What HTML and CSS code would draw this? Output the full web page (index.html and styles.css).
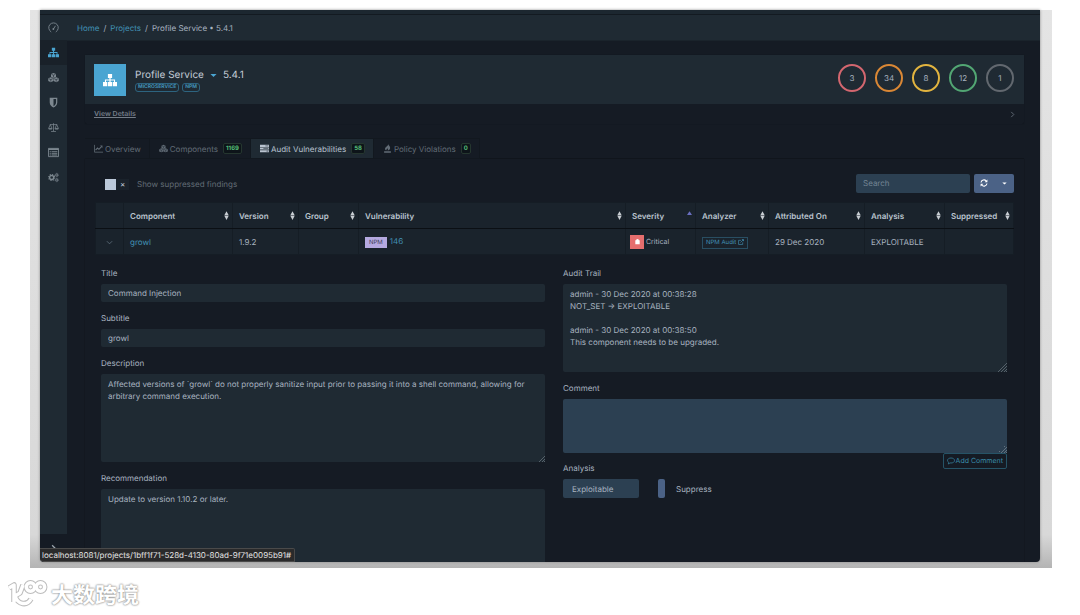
FILE: index.html
```
<!DOCTYPE html>
<html lang="en">
<head>
    <meta charset="UTF-8">
    <meta name="viewport" content="width=device-width, initial-scale=1.0">
    <title>Profile Service - Audit Vulnerabilities</title>
    <link rel="stylesheet" href="styles.css">
</head>
<body>

<!-- icon set -->
<svg class="icon-defs" aria-hidden="true">
    <symbol id="i-dash" viewBox="0 0 16 16"><path d="M4.2 14.2A7 7 0 1 1 11.8 14.2M8 10l2.600-4" fill="none" stroke="currentColor" stroke-width="1.300" stroke-linecap="round"/><circle cx="7.8" cy="10.2" r="1.300" fill="currentColor"/></symbol>
    <symbol id="i-sitemap" viewBox="0 0 16 16"><path d="M5.6 1h4.8v4.6H8.7v1.7h5.1v3.1H16V15h-4.8v-4.6h1.4V8.6H8.7v1.8h1.7V15H5.6v-4.6h1.7V8.6H3.4v1.8h1.4V15H0v-4.6h2.2V7.3h5.1V5.6H5.6z" fill="currentColor"/></symbol>
    <symbol id="i-cubes" viewBox="0 0 18 16"><path d="M9 .6l4.1 1.7v4.6L9 8.8 4.9 6.9V2.3zM4.6 7.6l4.1 1.8v4.4l-4.1 1.8-4.2-1.8V9.4zM13.4 7.6l4.2 1.8v4.4l-4.2 1.8-4.1-1.8V9.4z" fill="currentColor"/><path d="M5.6 2.8L9 4.2l3.4-1.4M9 4.2v3.6M1.1 9.9l3.5 1.5L8 9.9M4.6 11.4V15M10 9.9l3.4 1.5 3.5-1.5M13.4 11.4V15" fill="none" stroke="#1b252e" stroke-width="1"/></symbol>
    <symbol id="i-shield" viewBox="0 0 16 16"><path d="M2.500 1h11v7c0 3.600-2.500 5.800-5.500 7.400C5 13.800 2.500 11.600 2.500 8zM8 2.800V13.300c2.200-1.400 3.700-3 3.700-5.300V2.800z" fill="currentColor" fill-rule="evenodd"/></symbol>
    <symbol id="i-scale" viewBox="0 0 18 16"><path d="M9 1v13M5 14.500h8M3 3.200h12M3.800 3.200L1 9.500h5.600zM14.200 3.200l-2.800 6.300H17z" fill="none" stroke="currentColor" stroke-width="1.200"/><path d="M.5 9.500h6.600c-.5 2.600-6.100 2.600-6.600 0zM10.900 9.500h6.600c-.5 2.600-6.100 2.600-6.600 0z" fill="currentColor"/></symbol>
    <symbol id="i-list" viewBox="0 0 16 16"><path d="M.7 2h14.600v12H.7z" fill="none" stroke="currentColor" stroke-width="1.300"/><path d="M.7 2h14.600v2.500H.7zM2.500 6h1.600v1.400H2.500zM5.200 6h8.300v1.400H5.200zM2.500 8.500h1.600v1.400H2.500zM5.200 8.500h8.300v1.400H5.200zM2.500 11h1.600v1.400H2.500zM5.200 11h8.300v1.400H5.200z" fill="currentColor"/></symbol>
    <symbol id="i-cogs" viewBox="0 0 18 16"><g fill="none" stroke="currentColor"><circle cx="6" cy="8" r="3.300" stroke-width="2.200"/><circle cx="6" cy="8" r="5" stroke-width="1.700" stroke-dasharray="1.960 1.960"/><circle cx="14.300" cy="3.900" r="1.800" stroke-width="1.400"/><circle cx="14.300" cy="3.900" r="2.900" stroke-width="1" stroke-dasharray="1.140 1.140"/><circle cx="14.300" cy="12.100" r="1.800" stroke-width="1.400"/><circle cx="14.300" cy="12.100" r="2.900" stroke-width="1" stroke-dasharray="1.140 1.140"/></g></symbol>
    <symbol id="i-chart" viewBox="0 0 16 16"><path d="M.8 1.500v13H16" fill="none" stroke="currentColor" stroke-width="1.400"/><path d="M2.800 10.800l3.400-3.600 2.600 2.300 4.500-4.700" fill="none" stroke="currentColor" stroke-width="2"/><path d="M10.800 2.800H15V7z" fill="currentColor"/></symbol>
    <symbol id="i-tasks" viewBox="0 0 16 16"><path d="M0 1.500h16v3.700H0zM0 6.200h16v3.700H0zM0 10.900h16v3.700H0z" fill="currentColor"/><path d="M9.500 3.400h5.300M6 8h8.800M11.500 12.700h3.300" stroke="#1e2932" stroke-width="1"/></symbol>
    <symbol id="i-fire" viewBox="0 0 16 16"><path d="M2 13h12v2.500H2zM9.500.5c.6 2.500 3.500 3.600 3.200 6.700-.2 2.300-2 4-4.500 4.300 1-1.600.8-2.700-.3-3.800-.3 1.700-2.200 2-2.200 3.700C2.600 9.800 3.200 7 5.500 5.200 7.600 3.600 8.800 2.600 9.500.5z" fill="currentColor"/></symbol>
    <symbol id="i-refresh" viewBox="0 0 16 16"><path d="M2 7a6 6 0 0 1 10.500-3M14 9a6 6 0 0 1-10.500 3" fill="none" stroke="currentColor" stroke-width="2.200"/><path d="M14.800 1v5.600H9.200zM1.200 15V9.400h5.600z" fill="currentColor"/></symbol>
    <symbol id="i-bug" viewBox="0 0 16 16"><path d="M5 5a3 3 0 0 1 6 0h2v9H3V5z" fill="currentColor"/></symbol>
    <symbol id="i-link" viewBox="0 0 16 16"><path d="M8 3.500H1.500v11h11V9M6.500 9.500l6.500-6.500" fill="none" stroke="currentColor" stroke-width="1.700"/><path d="M9.500.5h6v6z" fill="currentColor"/></symbol>
    <symbol id="i-comment" viewBox="0 0 16 16"><path d="M8 2c4 0 7 2 7 5s-3 5-7 5c-.7 0-1.300 0-1.900-.2-1 1.100-2.300 1.900-3.800 2.100.7-.9 1.100-1.800 1.200-2.900C2 10 1 8.600 1 7c0-3 3-5 7-5z" fill="none" stroke="currentColor" stroke-width="1.400"/></symbol>
    <symbol id="i-right" viewBox="0 0 16 16"><path d="M5 2l6 6-6 6" fill="none" stroke="currentColor" stroke-width="2"/></symbol>
    <symbol id="i-down" viewBox="0 0 16 16"><path d="M2 5l6 6 6-6" fill="none" stroke="currentColor" stroke-width="1.800"/></symbol>
    <symbol id="i-caret" viewBox="0 0 16 16"><path d="M1 4.500h14L8 11.500z" fill="currentColor"/></symbol>
    <symbol id="i-sort" viewBox="0 0 8 14"><path d="M4 0l3.500 6.500h-7zM4 14l3.500-6.500h-7z" fill="currentColor"/></symbol>
    <symbol id="i-asc" viewBox="0 0 8 14"><path d="M4 0l4 6H0z" fill="currentColor"/></symbol>
</svg>

<div class="backdrop">
<div class="window">
    <div class="navbar"></div>
    <div class="app">

        <div class="sidebar">
            <nav class="side-nav">
                <a href="#" aria-label="Dashboard"><svg><use href="#i-dash"/></svg></a>
                <a href="#" class="active" aria-label="Projects"><svg><use href="#i-sitemap"/></svg></a>
                <a href="#" aria-label="Components"><svg><use href="#i-cubes"/></svg></a>
                <a href="#" aria-label="Vulnerabilities"><svg><use href="#i-shield"/></svg></a>
                <a href="#" aria-label="Licenses"><svg><use href="#i-scale"/></svg></a>
                <a href="#" aria-label="Policy Management"><svg><use href="#i-list"/></svg></a>
                <a href="#" aria-label="Administration"><svg><use href="#i-cogs"/></svg></a>
            </nav>
            <button type="button" class="minimizer" aria-label="Expand"><svg><use href="#i-right"/></svg></button>
        </div>

        <main>
            <div class="breadcrumb">
                <a href="#">Home</a><span>/</span><a href="#">Projects</a><span>/</span>Profile Service • 5.4.1
            </div>

            <div class="content">
                <div class="card">
                    <div class="card-body">
                        <div class="project-icon"><svg><use href="#i-sitemap"/></svg></div>
                        <div class="project">
                            <div class="project-name">Profile Service <svg><use href="#i-caret"/></svg> 5.4.1</div>
                            <div class="tags"><a href="#">MICROSERVICE</a><a href="#">NPM</a></div>
                        </div>
                        <div class="scores">
                            <span class="score critical">3</span>
                            <span class="score high">34</span>
                            <span class="score medium">8</span>
                            <span class="score low">12</span>
                            <span class="score unassigned">1</span>
                        </div>
                    </div>
                    <div class="card-footer">
                        <a href="#">View Details</a>
                        <svg><use href="#i-right"/></svg>
                    </div>
                </div>

                <div class="tabs">
                    <a href="#"><svg><use href="#i-chart"/></svg>Overview</a>
                    <a href="#"><svg><use href="#i-cubes"/></svg>Components <span class="badge">1169</span></a>
                    <a href="#" class="active"><svg><use href="#i-tasks"/></svg>Audit Vulnerabilities <span class="badge">58</span></a>
                    <a href="#"><svg><use href="#i-fire"/></svg>Policy Violations <span class="badge">0</span></a>
                </div>

                <div class="tab-content">
                    <div class="toolbar">
                        <label class="toggle"><input type="checkbox"><span class="switch">×</span>Show suppressed findings</label>
                        <input type="text" class="search" placeholder="Search" aria-label="Search">
                        <div class="btn-group">
                            <button type="button" aria-label="Refresh"><svg><use href="#i-refresh"/></svg></button>
                            <button type="button" aria-label="Columns"><svg class="small"><use href="#i-caret"/></svg></button>
                        </div>
                    </div>

                    <table>
                        <colgroup>
                            <col class="c-toggle"><col class="c-component"><col class="c-version"><col class="c-group"><col>
                            <col class="c-severity"><col class="c-analyzer"><col class="c-date"><col class="c-analysis"><col class="c-suppressed">
                        </colgroup>
                        <thead>
                            <tr>
                                <th></th>
                                <th><div>Component<svg><use href="#i-sort"/></svg></div></th>
                                <th><div>Version<svg><use href="#i-sort"/></svg></div></th>
                                <th><div>Group<svg><use href="#i-sort"/></svg></div></th>
                                <th><div>Vulnerability<svg><use href="#i-sort"/></svg></div></th>
                                <th><div>Severity<svg class="asc"><use href="#i-asc"/></svg></div></th>
                                <th><div>Analyzer<svg><use href="#i-sort"/></svg></div></th>
                                <th><div>Attributed On<svg><use href="#i-sort"/></svg></div></th>
                                <th><div>Analysis<svg><use href="#i-sort"/></svg></div></th>
                                <th><div>Suppressed<svg><use href="#i-sort"/></svg></div></th>
                            </tr>
                        </thead>
                        <tbody>
                            <tr>
                                <td class="expand"><svg><use href="#i-down"/></svg></td>
                                <td><a href="#">growl</a></td>
                                <td>1.9.2</td>
                                <td></td>
                                <td><span class="source">NPM</span><a href="#">146</a></td>
                                <td class="severity"><span class="sev-icon"><svg><use href="#i-bug"/></svg></span>Critical</td>
                                <td><a href="#" class="audit">NPM Audit <svg><use href="#i-link"/></svg></a></td>
                                <td>29 Dec 2020</td>
                                <td>EXPLOITABLE</td>
                                <td></td>
                            </tr>
                        </tbody>
                    </table>

                    <form class="detail">
                        <div class="detail-col">
                            <div class="form-group">
                                <label for="title">Title</label>
                                <input type="text" id="title" value="Command Injection" readonly>
                            </div>
                            <div class="form-group">
                                <label for="subtitle">Subtitle</label>
                                <input type="text" id="subtitle" value="growl" readonly>
                            </div>
                            <div class="form-group">
                                <label for="description">Description</label>
                                <textarea id="description" class="tall" readonly>Affected versions of `growl` do not properly sanitize input prior to passing it into a shell command, allowing for arbitrary command execution.</textarea>
                            </div>
                            <div class="form-group last">
                                <label for="recommendation">Recommendation</label>
                                <textarea id="recommendation" class="cut" readonly>Update to version 1.10.2 or later.</textarea>
                            </div>
                        </div>
                        <div class="detail-col">
                            <div class="form-group">
                                <label for="trail">Audit Trail</label>
                                <textarea id="trail" class="tall" readonly>admin - 30 Dec 2020 at 00:38:28
NOT_SET → EXPLOITABLE

admin - 30 Dec 2020 at 00:38:50
This component needs to be upgraded.</textarea>
                            </div>
                            <div class="form-group last">
                                <label for="comment">Comment</label>
                                <textarea id="comment" class="comment"></textarea>
                            </div>
                            <div class="actions">
                                <div class="analysis">
                                    <label for="analysis">Analysis</label>
                                    <div class="analysis-row">
                                        <select id="analysis"><option>Exploitable</option></select>
                                        <label class="suppress"><input type="checkbox"><span class="handle"></span>Suppress</label>
                                    </div>
                                </div>
                                <button type="button" class="add-comment"><svg><use href="#i-comment"/></svg>Add Comment</button>
                            </div>
                        </div>
                    </form>
                </div>
            </div>
        </main>
    </div>
    <div class="status">localhost:8081/projects/1bff1f71-528d-4130-80ad-9f71e0095b91#</div>
</div>
</div>

<div class="watermark">
    <svg viewBox="0 0 40 28"><g fill="none" stroke-linejoin="round"><g stroke="#bdbdbd" stroke-width="5.500"><path d="M1 8l5-3v17M15 5l-3 8-5 3c3 9 12 10 16 3"/><circle cx="22.500" cy="7" r="4.200"/><circle cx="32.500" cy="7" r="4.200"/></g><g stroke="#fff" stroke-width="3.500"><path d="M1 8l5-3v17M15 5l-3 8-5 3c3 9 12 10 16 3"/><circle cx="22.500" cy="7" r="4.200"/><circle cx="32.500" cy="7" r="4.200"/></g></g></svg>
    <span lang="zh">大数跨境</span>
</div>

</body>
</html>
```
FILE: styles.css
```
* {
    box-sizing: border-box;
}

body {
    margin: 0;
    background: #fff;
    color: #a9b4c0;
    font-family: Inter, "Liberation Sans", sans-serif;
    font-size: 8px;
    line-height: 12px;
    text-rendering: geometricPrecision;
}

a {
    color: #4292b6;
    text-decoration: none;
}

button, input, select, textarea {
    font: inherit;
    color: inherit;
    text-rendering: inherit;
    border: 0;
    margin: 0;
}

svg {
    width: 10px;
    height: 10px;
    flex: none;
}

.icon-defs {
    position: absolute;
    width: 0;
    height: 0;
}

/* window */

.backdrop {
    margin: 10px 28px 0 30px;
    padding: 0 12px 6px 10px;
    background: linear-gradient(#e4e4e4, #d8d8d8 94%, #b4b4b4);
}

.window {
    position: relative;
    background: #151b24;
    border-radius: 0 0 4px 4px;
    overflow: hidden;
    box-shadow: 0 0 3px #888;
}

.navbar {
    height: 5px;
    background: #1c2730;
    border-bottom: 1px solid #131a21;
}

.app {
    display: flex;
}

.sidebar {
    width: 27px;
    display: flex;
    flex-direction: column;
}

.side-nav {
    flex: 1;
    background: #1f2a33;
}

.side-nav a {
    display: flex;
    align-items: center;
    justify-content: center;
    height: 25px;
    color: #7d8890;
}

.side-nav svg {
    width: 11px;
    height: 11px;
}

.side-nav a.active {
    background: #192129;
    color: #4aa3cf;
}

.minimizer {
    height: 28px;
    padding: 4px 0 0;
    background: none;
    color: #9aa3ab;
}

main {
    flex: 1;
    min-width: 0;
}

.breadcrumb {
    height: 26px;
    padding: 0 10px;
    line-height: 26px;
    background: #1f2a33;
    border-bottom: 1px solid #1a232b;
}

.breadcrumb span {
    margin: 0 4px;
}

.content {
    padding: 14px 16px 0 18px;
}

/* project card */

.card {
    border-radius: 2px;
    box-shadow: 0 0 1px #0c1116;
    margin-bottom: 14px;
}

.card-body {
    display: flex;
    align-items: flex-start;
    height: 49px;
    padding: 9px 10px 0 9px;
    background: #1f2a33;
}

.project-icon {
    display: flex;
    align-items: center;
    justify-content: center;
    width: 32px;
    height: 32px;
    background: #4aa5d2;
    color: #fff;
}

.project-icon svg {
    width: 14px;
    height: 14px;
}

.project {
    flex: 1;
    margin: 4px 0 0 9px;
}

.project-name {
    display: flex;
    align-items: center;
    gap: 6px;
    font-size: 10px;
    line-height: 14px;
    color: #c5cdd8;
}

.project-name svg {
    width: 7px;
    height: 7px;
    color: #4aa5d2;
}

.tags {
    display: flex;
    gap: 3px;
    margin-top: 1px;
}

.tags a {
    padding: 0 2px;
    border: 1px solid #2d6480;
    border-radius: 3px;
    font-size: 5px;
    font-weight: 700;
    line-height: 7px;
}

.scores {
    display: flex;
    gap: 9px;
}

.score {
    width: 28px;
    height: 28px;
    border: 2px solid;
    border-radius: 50%;
    line-height: 24px;
    text-align: center;
}

.critical { border-color: #d3666f; }
.high { border-color: #d98735; }
.medium { border-color: #e2b43f; }
.low { border-color: #52a673; }
.unassigned { border-color: #62686f; }

.card-footer {
    display: flex;
    align-items: center;
    justify-content: space-between;
    height: 20px;
    padding: 0 8px 0 9px;
}

.card-footer a {
    color: #747d88;
    font-size: 7px;
    font-weight: 600;
    text-decoration: underline;
}

.card-footer svg {
    width: 7px;
    height: 7px;
    color: #68717c;
}

/* tabs */

.tabs {
    display: flex;
    box-shadow: inset 0 -1px #12181f;
}

.tabs a {
    display: flex;
    align-items: center;
    height: 21px;
    padding: 0 8px 0 9px;
    border: 1px solid #12181f;
    border-left: 0;
    color: #626c76;
}

.tabs svg {
    width: 9px;
    height: 9px;
    margin-right: 2px;
}

.tabs a.active {
    background: #1f2a33;
    color: #b9c3cf;
}

.badge {
    margin-left: 5px;
    padding: 0 2px;
    border: 1px solid #25362f;
    border-radius: 2px;
    background: #0d1419;
    color: #54bd78;
    font-size: 6px;
    font-weight: 700;
    line-height: 9px;
}

.tab-content {
    padding: 14px 10px 0;
    box-shadow: 0 0 1px #0c1116;
}

.toolbar {
    display: flex;
    align-items: center;
    gap: 4px;
    height: 20px;
    margin-bottom: 9px;
}

.toggle {
    flex: 1;
    display: flex;
    align-items: center;
    padding: 2px 0 0 10px;
    color: #626c76;
}

.toggle input, .suppress input {
    position: absolute;
    opacity: 0;
}

.switch {
    width: 24px;
    height: 11px;
    margin-right: 8px;
    padding-left: 4px;
    border-left: 11px solid #bcc9d9;
    background: #1a222b;
    color: #c5cdd8;
    line-height: 11px;
}

.search {
    width: 114px;
    height: 19px;
    padding: 0 7px;
    border-radius: 2px;
    background: #2c4052;
}

.search::placeholder {
    color: #738594;
}

.btn-group {
    display: flex;
    border-radius: 2px;
    background: #4b6286;
}

.btn-group button {
    display: flex;
    align-items: center;
    justify-content: center;
    width: 20px;
    height: 19px;
    padding: 0;
    background: none;
    color: #fff;
}

.btn-group svg {
    width: 8px;
    height: 8px;
}

.btn-group .small {
    width: 5px;
    height: 5px;
}

/* findings */

table {
    width: 100%;
    table-layout: fixed;
    border-collapse: collapse;
    background: #1a232c;
}

.c-toggle { width: 28px; }
.c-component { width: 109px; }
.c-version { width: 66px; }
.c-group { width: 60px; }
.c-severity { width: 70px; }
.c-analyzer { width: 73px; }
.c-date { width: 96px; }
.c-analysis { width: 80px; }
.c-suppressed { width: 69px; }

th, td {
    height: 26px;
    padding: 0 0 0 6px;
    border: 1px solid #151d25;
    text-align: left;
    white-space: nowrap;
}

th {
    border-bottom-color: #0b0f14;
    color: #bac4cf;
    font-weight: 600;
}

th div {
    display: flex;
    align-items: center;
    justify-content: space-between;
    padding-right: 3px;
}

th svg {
    width: 5px;
    height: 9px;
    color: #c9ced3;
}

th .asc {
    color: #6a6fc0;
}

td svg {
    vertical-align: middle;
}

.expand svg {
    width: 7px;
    height: 7px;
    margin-left: 4px;
    color: #647381;
}

.source {
    display: inline-block;
    margin-right: 3px;
    padding: 0 4px;
    background: #b5a9e0;
    color: #3c3b58;
    font-size: 6px;
    line-height: 11px;
}

.severity {
    padding-left: 4px;
    font-size: 7px;
}

.sev-icon {
    display: inline-flex;
    align-items: center;
    justify-content: center;
    width: 14px;
    height: 14px;
    margin-right: 2px;
    background: #e56e6e;
    color: #fff;
    vertical-align: middle;
}

.sev-icon svg {
    width: 7px;
    height: 7px;
}

.audit {
    display: inline-block;
    padding: 0 3px;
    border: 1px solid #294e62;
    font-size: 6px;
    line-height: 10px;
}

.audit svg {
    width: 6px;
    height: 6px;
}

/* finding detail */

.detail {
    display: grid;
    grid-template-columns: 1fr 1fr;
    gap: 18px;
    padding: 12px 7px 0 6px;
}

.form-group {
    margin-bottom: 10px;
}

.form-group.last {
    margin-bottom: 0;
}

.form-group label, .analysis > label {
    display: block;
    margin-bottom: 5px;
}

.form-group input, textarea {
    display: block;
    width: 100%;
    padding: 0 7px;
    border-radius: 2px;
    background: #1f2a33;
}

.form-group input {
    height: 18px;
}

textarea {
    padding-top: 4px;
    resize: vertical;
    outline: none;
}

/* hatched corner grip */
textarea::-webkit-resizer {
    background:
        linear-gradient(135deg, #1f2a33 50%, transparent 50%) right bottom / 9px 9px no-repeat,
        repeating-linear-gradient(135deg, #56616a 0 1px, #1f2a33 1px 2px) right bottom / 9px 9px no-repeat;
}

.comment::-webkit-resizer {
    background:
        linear-gradient(135deg, #2c4052 50%, transparent 50%) right bottom / 9px 9px no-repeat,
        repeating-linear-gradient(135deg, #62727f 0 1px, #2c4052 1px 2px) right bottom / 9px 9px no-repeat;
}

.tall {
    height: 88px;
}

.cut {
    height: 73px;
    resize: none;
    border-radius: 2px 2px 0 0;
}

.comment {
    height: 54px;
    background: #2c4052;
}

.actions {
    display: flex;
    justify-content: space-between;
    align-items: flex-start;
}

.analysis {
    padding-top: 9px;
}

.analysis-row {
    display: flex;
    gap: 19px;
}

select {
    width: 76px;
    height: 19px;
    padding: 0 9px;
    border-radius: 2px;
    background: #2c4052;
    appearance: none;
}

.suppress {
    display: flex;
    align-items: center;
}

.handle {
    width: 7px;
    height: 19px;
    margin-right: 11px;
    border-radius: 2px;
    background: #4b6286;
}

.add-comment {
    display: flex;
    align-items: center;
    gap: 1px;
    height: 16px;
    padding: 0 3px;
    border: 1px solid #265366;
    border-radius: 2px;
    background: none;
    color: #398aa8;
    font-size: 7px;
}

.add-comment svg {
    width: 8px;
    height: 8px;
}

/* browser link preview */

.status {
    position: absolute;
    left: 0;
    bottom: 0;
    padding: 0 3px 0 2px;
    border: 1px solid #4a4a4a;
    border-left: 0;
    border-radius: 0 2px 0 4px;
    background: #2a2a2b;
    color: #e6e6e6;
    line-height: 12px;
}

.watermark {
    display: flex;
    align-items: center;
    gap: 3px;
    margin: 11px 0 0 8px;
    color: #fff;
    font-family: "Noto Sans CJK SC", sans-serif;
    font-size: 22px;
    font-weight: 700;
    line-height: 30px;
    text-shadow: 0 0 2px #888, 0 0 2px #999;
}

.watermark svg {
    width: 40px;
    height: 28px;
}
```
